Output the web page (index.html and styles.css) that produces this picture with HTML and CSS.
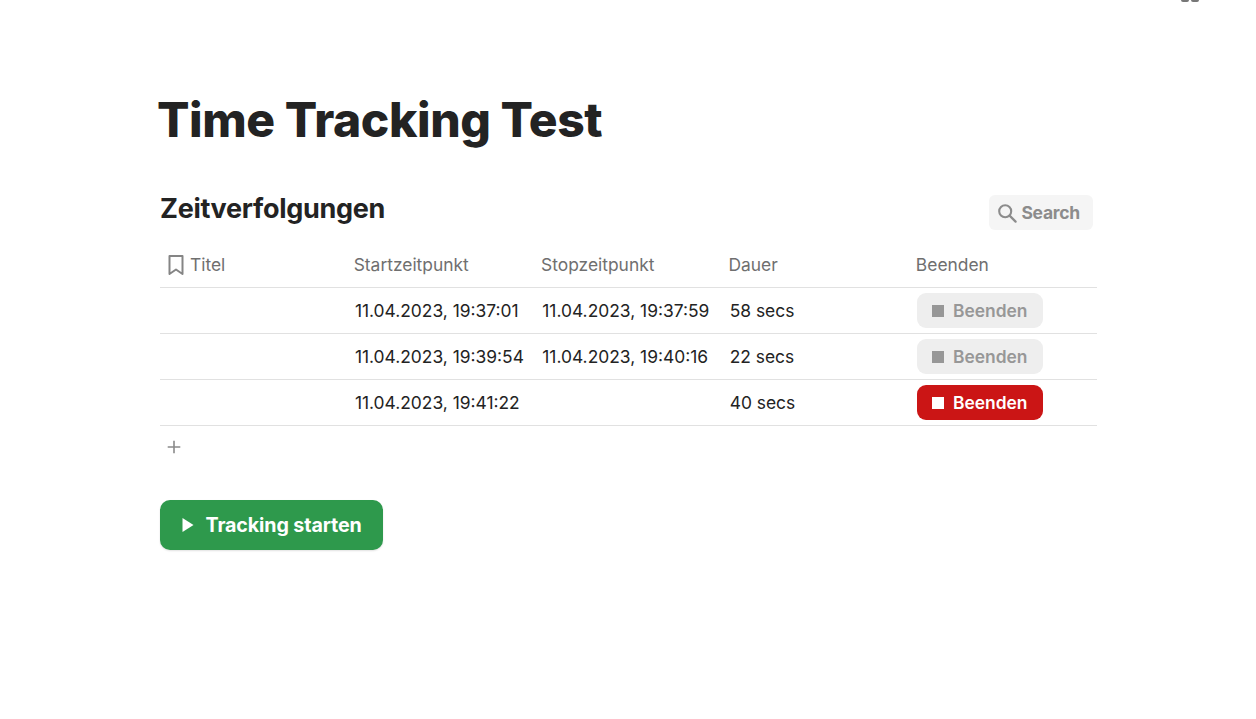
FILE: index.html
```html
<!DOCTYPE html>
<html lang="de">
<head>
<meta charset="utf-8">
<title>Time Tracking Test</title>
<link rel="stylesheet" href="styles.css">
</head>
<body>
<div class="top-icon"><span></span><span></span></div>
<main class="page">
  <h1 class="title">Time Tracking Test</h1>
  <div class="db-head">
    <h2 class="db-title">Zeitverfolgungen</h2>
    <div class="search">
      <svg class="search-icon" viewBox="0 0 20 20" width="20" height="20"><circle cx="8.200" cy="8.200" r="6" fill="none" stroke="currentColor" stroke-width="2.100"/><path d="M12.600 12.600 18.600 18.600" fill="none" stroke="currentColor" stroke-width="2.200" stroke-linecap="round"/></svg>
      <span>Search</span>
    </div>
  </div>
  <div class="table">
    <div class="row head">
      <div class="cell first"><svg class="bookmark" viewBox="0 0 16 20" width="16" height="20"><path d="M1.500 1H14.500V19L8 14.500 1.500 19Z" fill="none" stroke="currentColor" stroke-width="2" stroke-linejoin="round"/></svg>Titel</div>
      <div class="cell">Startzeitpunkt</div>
      <div class="cell">Stopzeitpunkt</div>
      <div class="cell">Dauer</div>
      <div class="cell">Beenden</div>
    </div>
    <div class="row">
      <div class="cell"></div>
      <div class="cell data">11.04.2023, 19:37:01</div>
      <div class="cell data">11.04.2023, 19:37:59</div>
      <div class="cell data">58 secs</div>
      <div class="cell data"><div class="stop off"><i></i>Beenden</div></div>
    </div>
    <div class="row">
      <div class="cell"></div>
      <div class="cell data">11.04.2023, 19:39:54</div>
      <div class="cell data">11.04.2023, 19:40:16</div>
      <div class="cell data">22 secs</div>
      <div class="cell data"><div class="stop off"><i></i>Beenden</div></div>
    </div>
    <div class="row">
      <div class="cell"></div>
      <div class="cell data">11.04.2023, 19:41:22</div>
      <div class="cell data"></div>
      <div class="cell data">40 secs</div>
      <div class="cell data"><div class="stop on"><i></i>Beenden</div></div>
    </div>
  </div>
  <div class="add"><svg viewBox="0 0 14 14" width="14" height="14"><path d="M7 .7V13.300M.7 7H13.300" fill="none" stroke="currentColor" stroke-width="1.600"/></svg></div>
  <div class="start"><svg viewBox="0 0 12 14" width="12" height="14"><path d="M.5 0 11.500 7 .5 14Z" fill="currentColor"/></svg><span>Tracking starten</span></div>
</main>
</body>
</html>
```
FILE: styles.css
```css
* { box-sizing: border-box; }
html, body { margin: 0; height: 100%; background: #fff; overflow: hidden; }
body { font-family: Inter, "Noto Sans", sans-serif; color: #232323; }
.top-icon { position: absolute; top: 0; left: 1181px; display: flex; gap: 2px; }
.top-icon span { width: 8px; height: 2px; background: #777; border-radius: 0 0 2px 2px; }
.page { width: 937px; margin-left: 160px; padding-top: 91px; }
.title { margin: 0 0 0 -3px; font-size: 48px; line-height: 58px; font-weight: 800; letter-spacing: -0.42px; color: #232323; }
.db-head { display: flex; justify-content: space-between; margin-top: 41px; height: 51px; padding-right: 4px; }
.db-title { margin: 1px 0 0; font-size: 27px; line-height: 35px; font-weight: 700; letter-spacing: -0.3px; }
.search { display: flex; align-items: center; gap: 4px; height: 35px; margin-top: 5px; padding: 0 13px 0 8px; border-radius: 6px; background: #f5f5f5; color: #8c8c8c; font-size: 17.500px; font-weight: 700; letter-spacing: -0.25px; }
.table { font-size: 17.400px; }
.row { display: grid; grid-template-columns: repeat(5, 187.400px); height: 46px; border-bottom: 1px solid #e1e1e1; align-items: center; }
.head { height: 47px; color: #6f6f6f; align-items: start; padding-top: 12px; }
.cell { padding-left: 6.300px; line-height: 24px; white-space: nowrap; }
.cell.data { padding-left: 7.500px; }
.cell.first { display: flex; align-items: center; gap: 6px; padding-left: 8px; }
.bookmark { color: #858585; }
.stop { display: flex; align-items: center; width: 126px; height: 35px; padding-left: 15px; gap: 9px; border-radius: 9px; font-weight: 600; }
.stop i { width: 12px; height: 12px; background: currentColor; }
.off { background: #eeeeee; color: #979797; }
.on { background: #cb1515; color: #fff; }
.add { height: 42px; padding: 14px 0 0 7px; color: #8a8a8a; }
.add svg { display: block; }
.start { display: flex; align-items: center; gap: 12px; width: 223px; height: 50px; margin-top: 32px; padding-left: 21.500px; border-radius: 10px; background: #2e994c; color: #fff; font-size: 19.700px; font-weight: 700; letter-spacing: -0.12px; box-shadow: 0 1px 2px rgba(0,0,0,.12); }
```
